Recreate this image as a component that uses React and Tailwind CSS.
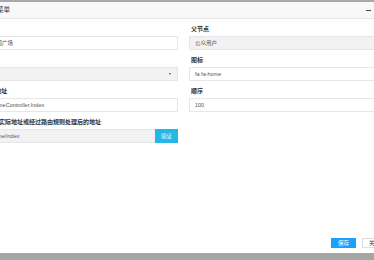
export default function App() {
  const font = "font-['Liberation_Sans','Noto_Sans_CJK_SC',sans-serif]";
  const label = "block h-[7px] leading-[7px] text-[6px] font-bold text-[#333] pl-[2px] mb-[3px] whitespace-nowrap";
  const input = "h-[14px] border border-[#e5e6e7] px-[5px] flex items-center text-[5.5px] text-[#555] whitespace-nowrap overflow-hidden";
  return (
    <div className={`w-[374px] h-[260px] overflow-hidden bg-white flex flex-col ${font}`}>
      <div className="h-[2px] bg-[#a9a9a9] shrink-0" />
      <div className="h-[17px] shrink-0 bg-[#f8f8f8] border-b border-[#e7e7e7] flex items-center justify-between">
        <span className="ml-[-16px] text-[6.5px] text-[#333] whitespace-nowrap">编辑菜单</span>
        <div className="flex items-center gap-[5px] mr-[-8px]">
          <span className="block w-[5px] h-[1px] bg-[#444]" />
          <span className="block w-[6px] h-[6px] border border-[#555]" />
        </div>
      </div>
      <div className="flex-1 flex flex-col ml-[-15px] w-[397px]">
        <div className="grid grid-cols-2 gap-x-[11px] gap-y-[7px] pt-[7px]">
          <div>
            <span className={label}>名称</span>
            <div className={`${input} bg-white`}>新闻广场</div>
          </div>
          <div>
            <span className={label}>父节点</span>
            <div className={`${input} bg-[#f2f2f2]`}>公众用户</div>
          </div>
          <div>
            <span className={label}>类型</span>
            <div className={`${input} bg-[#f2f2f2] justify-end`}>
              <span className="block w-0 h-0 border-l-[1.5px] border-r-[1.5px] border-t-[2px] border-l-transparent border-r-transparent border-t-[#555] mr-[1px]" />
            </div>
          </div>
          <div>
            <span className={label}>图标</span>
            <div className={`${input} bg-white`}>fa fa-home</div>
          </div>
          <div>
            <span className={label}>Url地址</span>
            <div className={`${input} bg-white`}>HomeController.Index</div>
          </div>
          <div>
            <span className={label}>顺序</span>
            <div className={`${input} bg-white`}>100</div>
          </div>
          <div>
            <span className={label}>页面实际地址或经过路由规则处理后的地址</span>
            <div className="flex h-[14px]">
              <div className={`${input} flex-1 bg-[#f2f2f2] border-r-0`}>home/index</div>
              <div className="w-[23px] h-[14px] bg-[#23b7e5] text-white text-[5.5px] flex items-center justify-center">验证</div>
            </div>
          </div>
        </div>
        <div className="mt-auto flex justify-end gap-[6px] mr-[-5px] pb-[5px]">
          <div className="w-[25px] h-[10px] bg-[#1e9fff] text-white text-[5.5px] flex items-center justify-center">保存</div>
          <div className="w-[25px] h-[10px] bg-white border border-[#dedede] text-[#333] text-[5.5px] flex items-center justify-center">关闭</div>
        </div>
      </div>
      <div className="h-[7px] bg-[#a6a6a6] shrink-0" />
    </div>
  );
}
